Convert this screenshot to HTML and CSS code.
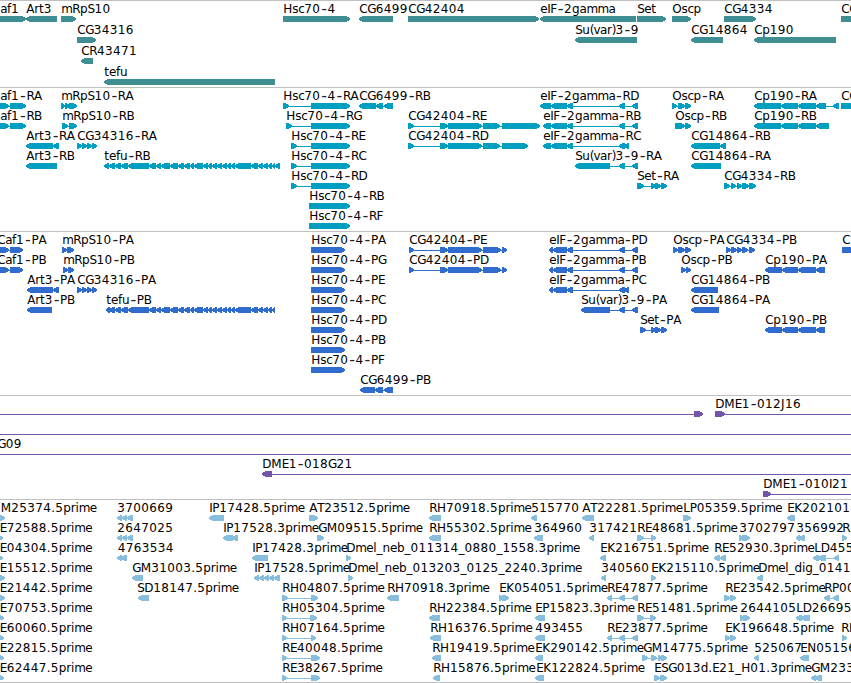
FILE: index.html
```html
<!DOCTYPE html>
<html lang="en">
<head>
<meta charset="utf-8">
<title>Genome browser</title>
<link rel="stylesheet" href="styles.css">
</head>
<body>
<main class="browser">
<section class="track genes" id="genes"></section>
<section class="track transcripts" id="transcripts"></section>
<section class="track proteins" id="proteins"></section>
<section class="track clones" id="clones"></section>
<section class="track ests" id="ests"></section>
</main>
<script src="tracks.js"></script>
</body>
</html>
```
FILE: styles.css
```css
body {
  margin: 0;
  background: #fff;
  overflow: hidden;
}
.browser {
  display: flex;
  flex-direction: column;
  height: 683px;
  overflow: hidden;
  border-bottom: 1px solid #bfbfbf;
  box-sizing: border-box;
}
.track {
  display: flex;
  flex-direction: column;
  box-sizing: border-box;
  flex: none;
  border-top: 1px solid #bfbfbf;
}
.row {
  display: block;
  width: 851px;
  height: 20px;
  flex: none;
  overflow: visible;
}
.genes { height: 87px; color: #3e8e93; }
.genes .row { height: 21px; }
.transcripts { height: 144px; color: #009fc1; }
.proteins { height: 164px; color: #306bce; }
.clones { height: 104px; color: #7356a8; }
.ests { height: 183px; color: #87bddd; }
.label {
  font-family: "DejaVu Sans", sans-serif;
  font-size: 12px;
  fill: #000;
}
.dash { font-size: 16px; fill: #222; }
.glyph {
  fill: currentColor;
  shape-rendering: crispEdges;
}
```
FILE: tracks.js
```js
// Feature: label|label x|direction|start:end,start:end  (coordinates in pixels).
// Direction ">" or "<"; features in a row are separated by two spaces.
const TEFU = '109:115,115:121,121:128,128:149,149:156,156:161,161:170,170:178,178:184,184:190,190:194,194:203,203:208,208:212,212:217,217:222,222:227,227:231,231:235,235:251,251:258,258:263,263:268,268:272,272:275';

const tracks = {
  genes: [
    'af1|0|>|-9:26  Art3|26|<|26:57  mRpS10|61|>|61:76  Hsc70-4|283|>|283:350  CG6499|359|<|359:393  CG42404|408|>|408:539  eIF-2gamma|540|<|540:636  Set|637|>|637:666  Oscp|672|>|672:691  CG4334|724|>|724:756  CG|841|>|841:870',
    'CG34316|77|>|77:96  Su(var)3-9|575|<|575:637  CG14864|691|<|691:723  Cp190|754|<|754:836',
    'CR43471|81|<|81:93',
    'tefu|104|<|104:275'
  ],
  transcripts: [
    'af1-RA|0|>|-6:9,10:26  mRpS10-RA|61|>|61:65,65:70,69:77  Hsc70-4-RA|283|>|283:289,311:350  CG6499-RB|359|<|359:376,376:383,384:393  eIF-2gamma-RD|540|<|540:551,551:567,567:573,619:625,632:638  Oscp-RA|672|>|672:677,678:685,685:691  Cp190-RA|754|<|754:781,781:798,798:816,816:826,833:839  CG|841|>|841:870',
    'af1-RB|0|>|-6:9,10:26  mRpS10-RB|62|>|62:68,69:77  Hsc70-4-RG|286|>|286:292,311:350  CG42404-RE|408|>|408:414,440:448,448:482,483:500,502:540  eIF-2gamma-RB|543|<|543:551,551:567,567:573,619:625,632:638  Oscp-RB|675|>|675:685,685:691  Cp190-RB|754|<|754:781,781:798,798:816,816:829',
    'Art3-RA|26|<|26:53,53:59  CG34316-RA|77|>|77:82,82:87,87:92,92:97  Hsc70-4-RE|291|>|291:297,311:350  CG42404-RD|408|>|408:414,440:448,448:482,483:500,502:528  eIF-2gamma-RC|543|<|543:551,551:567,567:573,619:625,624:629  CG14864-RB|691|<|691:720,720:726',
    'Art3-RB|26|<|26:57  tefu-RB|104|<|104:109,TEFU,275:280  Hsc70-4-RC|291|>|291:297,311:350  Su(var)3-9-RA|575|<|575:610,619:625,632:638  CG14864-RA|691|<|691:721',
    'Hsc70-4-RD|291|>|291:297,311:350  Set-RA|637|>|637:644,651:656,655:661,661:667  CG4334-RB|724|>|724:730,731:736,737:742,742:749,749:756',
    'Hsc70-4-RB|309|>|309:350',
    'Hsc70-4-RF|309|>|309:350'
  ],
  proteins: [
    'Caf1-PA|-3|>|-6:9,10:23  mRpS10-PA|62|>|62:67,67:74  Hsc70-4-PA|311|>|311:345  CG42404-PE|409|>|409:414,440:448,448:482,483:501,502:507  eIF-2gamma-PD|549|<|549:553,553:567,567:573,619:625,632:638  Oscp-PA|673|>|673:678,678:685,685:691  CG4334-PB|726|>|726:731,731:737,737:742,742:748,749:755  C|842|>|842:870',
    'Caf1-PB|-3|>|-6:9,10:23  mRpS10-PB|63|>|63:68,68:74  Hsc70-4-PG|311|>|311:345  CG42404-PD|409|>|409:414,440:448,448:482,483:501,502:507  eIF-2gamma-PB|549|<|549:553,553:567,567:573,619:625,632:638  Oscp-PB|681|>|681:686,686:691  Cp190-PA|765|<|765:782,782:798,798:816,816:825',
    'Art3-PA|27|<|27:53,53:59  CG34316-PA|77|>|77:82,82:87,87:92,92:97  Hsc70-4-PE|311|>|311:345  eIF-2gamma-PC|549|<|549:553,553:567,567:573,619:625,624:629  CG14864-PB|691|<|691:718',
    'Art3-PB|27|<|27:52  tefu-PB|106|<|106:110,TEFU  Hsc70-4-PC|311|>|311:345  Su(var)3-9-PA|581|<|581:610,619:625,632:638  CG14864-PA|691|<|691:719',
    'Hsc70-4-PD|311|>|311:345  Set-PA|640|>|640:646,651:656,655:661,661:667  Cp190-PB|765|<|765:782,782:798,798:816,816:825',
    'Hsc70-4-PB|311|>|311:345',
    'Hsc70-4-PF|311|>|311:345',
    'CG6499-PB|360|<|360:375,375:383,384:393'
  ],
  clones: [
    '|0|>|-20:-10,694:703  DME1-012J16|715|>|715:725,870:880',
    '|0|>|-20:-10,870:880',
    'G09|-3|>|-20:-10,870:880',
    'DME1-018G21|262|<|262:272,870:880',
    'DME1-010I21|763|>|763:771,870:880'
  ],
  ests: [
    'M25374.5prime|0.5|>|-5:5  3700669|117|<|117:122,122:127,127:133  IP17428.5prime|209|<|209:224  AT23512.5prime|309|>|309:318  RH70918.5prime|429|<|429:441  515770|531|<|531:537  AT22281.5prime|582|<|582:594  LP05359.5prime|683|>|683:687,685:691  EK202101|787|<|787:795',
    'E72588.5prime|-0.5|>|-5:3  2647025|117|<|117:122,122:127,127:133  IP17528.3prime|223|<|223:233,232:238  GM09515.5prime|318|>|317:324  RH55302.5prime|429|<|429:441  364960|534|<|534:543  317421|589|<|589:594  RE48681.5prime|637|>|637:644,651:656  3702797|739|>|739:744,742:750  356992|796|<|796:800,799:805  R|842|>|842:847',
    'E04304.5prime|-0.5|>|-5:3  4763534|117.5|<|117:122,121:127  IP17428.3prime|252|<|252:268  Dmel_neb_011314_0880_1558.3prime|346|>|346:351  EK216751.5prime|600|<|600:606  RE52930.3prime|714|<|714:720,720:726  LD455|814|<|813:819,818:826,834:839',
    'E15512.5prime|-0.5|>|-5:5  GM31003.5prime|132|<|132:143  IP17528.5prime|254|<|254:259,259:264,264:269,269:274,274:280  Dmel_neb_013203_0125_2240.3prime|348|>|348:353  340560|601|<|601:606  EK215110.5prime|651|>|651:656  Dmel_dig_0141|758|<|757:763',
    'E21442.5prime|-0.5|>|-5:5  SD18147.5prime|137|<|138:149  RH04807.5prime|282|>|282:288,311:318  RH70918.3prime|387|<|387:399  EK054051.5prime|499|>|499:504,502:509  RE47877.5prime|607|<|607:612,619:625,632:638  RE23542.5prime|725|>|724:730,730:736  RP00|824|<|824:830,833:839',
    'E70753.5prime|-0.5|>|-5:4  RH05304.5prime|282|>|282:287,310:317  RH22384.5prime|429|<|429:440  EP15823.3prime|535|<|535:545  RE51481.5prime|637|>|637:644,650:656  2644105|740|>|740:744,743:750  LD26695|796|<|796:802,801:810',
    'E60060.5prime|-0.5|>|-5:4  RH07164.5prime|282|>|282:287,311:316  RH16376.5prime|430|<|430:441  493455|535|<|535:545  RE23877.5prime|607|<|607:612,619:625,632:638  EK196648.5prime|725|>|725:730,730:736  RE|841|>|842:847',
    'E22815.5prime|-0.5|>|-5:4  RE40048.5prime|282|>|282:287,311:320  RH19419.5prime|432|<|432:441  EK290142.5prime|535|<|535:543  GM14775.5prime|643|>|642:648,651:657,658:662,661:667  525067|754|<|754:759  EN05156|800|<|800:809',
    'E62447.5prime|-0.5|>|-5:4  RE38267.5prime|282|>|282:287,311:320  RH15876.5prime|433|<|433:440  EK122824.5prime|536|<|535:544  ESG013d.E21_H01.3prime|654|>|654:660,660:667  GM233|811|<|811:816,815:822'
  ]
};

// Fixed advance widths of the label characters.
const ADV = {
  '-': 7.3, '.': 4, '_': 6, '(': 3.8, ')': 3.8,
  A: 8, C: 8, D: 9, E: 7, F: 6.5, G: 8.5, H: 9, I: 3, J: 4, K: 8, L: 6.5,
  M: 10.5, N: 9, O: 9.3, P: 7, R: 7.7, S: 7, T: 7,
  a: 6.8, b: 7.5, c: 6, d: 7.5, e: 7, f: 4, g: 7.5, i: 3.2, l: 3.2, m: 11,
  n: 7.5, p: 7.5, r: 4.8, s: 6, t: 4.7, u: 7.5, v: 6.5
};
const NS = 'http://www.w3.org/2000/svg';

function add(parent, name, attrs) {
  const el = document.createElementNS(NS, name);
  for (const k in attrs) el.setAttribute(k, attrs[k]);
  parent.appendChild(el);
  return el;
}

function drawFeature(svg, spec) {
  const [label, lx, dir, segs] = spec.split('|');
  const parts = segs.replace('TEFU', TEFU).split(',').map(s => s.split(':').map(Number));
  const start = parts[0][0];
  const end = parts[parts.length - 1][1];
  add(svg, 'rect', { class: 'glyph', x: start, y: 18, width: end - start, height: 1 });
  for (const [a, b] of parts) {
    const tip = Math.min(b - a - 1, 4.5);
    const points = dir === '>'
      ? `${a},15 ${b - tip},15 ${b},17.2 ${b},18.8 ${b - tip},21 ${a},21`
      : `${b},15 ${a + tip},15 ${a},17.2 ${a},18.8 ${a + tip},21 ${b},21`;
    add(svg, 'polygon', { class: 'glyph', points });
  }
  if (!label) return;
  let x = +lx + 0.3;
  const xs = [];
  for (const ch of label) {
    const digit = ch >= '0' && ch <= '9';
    xs.push((x + (ch === '-' ? 0.9 : 0)).toFixed(1));
    x += digit ? 8 : ADV[ch] || 7;
  }
  const text = add(svg, 'text', { class: 'label', x: xs.join(' '), y: 12 });
  for (const piece of label.split(/(-)/)) {
    if (piece === '-') add(text, 'tspan', { class: 'dash', y: 13 }).textContent = piece;
    else if (piece) add(text, 'tspan', { y: 12 }).textContent = piece;
  }
}

for (const id in tracks) {
  const host = document.getElementById(id);
  for (const row of tracks[id]) {
    const svg = add(host, 'svg', { class: 'row' });
    row.split('  ').forEach(f => drawFeature(svg, f));
  }
}
```
